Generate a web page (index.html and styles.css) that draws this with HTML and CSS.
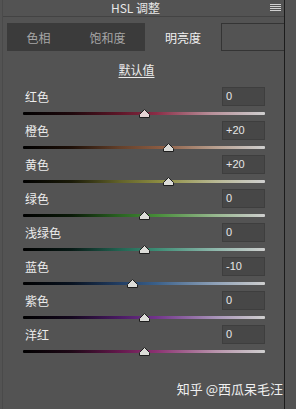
FILE: index.html
```html
<!DOCTYPE html>
<html lang="zh">
<head>
<meta charset="utf-8">
<link rel="stylesheet" href="styles.css">
</head>
<body>
<div class="panel">
  <div class="header">
    <span class="title">HSL 调整</span>
    <svg class="menu" width="11" height="8" viewBox="0 0 11 8"><g fill="#d0d0d0"><rect x="0" y="0" width="11" height="1"/><rect x="0" y="2" width="11" height="1"/><rect x="0" y="4" width="11" height="1"/><rect x="0" y="6" width="11" height="1"/></g></svg>
  </div>
  <div class="tabs">
    <div class="tab t1">色相</div>
    <div class="tab t2">饱和度</div>
    <div class="tab active">明亮度</div>
    <div class="tab-rest"></div>
  </div>
  <div class="default"><span>默认值</span></div>
  <div class="rows">
    <div class="row red">
      <div class="row-top"><span class="label">红色</span><span class="value">0</span></div>
      <div class="slider"><div class="track"></div><svg class="thumb" style="left: calc(50% + 0px)" width="11" height="9" viewBox="0 0 11 9"><polygon points="5.5,0.5 10.5,5.5 10.5,8.5 0.5,8.5 0.5,5.5"/></svg></div>
    </div>
    <div class="row orange">
      <div class="row-top"><span class="label">橙色</span><span class="value">+20</span></div>
      <div class="slider"><div class="track"></div><svg class="thumb" style="left: calc(50% + 24px)" width="11" height="9" viewBox="0 0 11 9"><polygon points="5.5,0.5 10.5,5.5 10.5,8.5 0.5,8.5 0.5,5.5"/></svg></div>
    </div>
    <div class="row yellow">
      <div class="row-top"><span class="label">黄色</span><span class="value">+20</span></div>
      <div class="slider"><div class="track"></div><svg class="thumb" style="left: calc(50% + 24px)" width="11" height="9" viewBox="0 0 11 9"><polygon points="5.5,0.5 10.5,5.5 10.5,8.5 0.5,8.5 0.5,5.5"/></svg></div>
    </div>
    <div class="row green">
      <div class="row-top"><span class="label">绿色</span><span class="value">0</span></div>
      <div class="slider"><div class="track"></div><svg class="thumb" style="left: calc(50% + 0px)" width="11" height="9" viewBox="0 0 11 9"><polygon points="5.5,0.5 10.5,5.5 10.5,8.5 0.5,8.5 0.5,5.5"/></svg></div>
    </div>
    <div class="row aqua">
      <div class="row-top"><span class="label">浅绿色</span><span class="value">0</span></div>
      <div class="slider"><div class="track"></div><svg class="thumb" style="left: calc(50% + 0px)" width="11" height="9" viewBox="0 0 11 9"><polygon points="5.5,0.5 10.5,5.5 10.5,8.5 0.5,8.5 0.5,5.5"/></svg></div>
    </div>
    <div class="row blue">
      <div class="row-top"><span class="label">蓝色</span><span class="value">-10</span></div>
      <div class="slider"><div class="track"></div><svg class="thumb" style="left: calc(50% - 12px)" width="11" height="9" viewBox="0 0 11 9"><polygon points="5.5,0.5 10.5,5.5 10.5,8.5 0.5,8.5 0.5,5.5"/></svg></div>
    </div>
    <div class="row purple">
      <div class="row-top"><span class="label">紫色</span><span class="value">0</span></div>
      <div class="slider"><div class="track"></div><svg class="thumb" style="left: calc(50% + 0px)" width="11" height="9" viewBox="0 0 11 9"><polygon points="5.5,0.5 10.5,5.5 10.5,8.5 0.5,8.5 0.5,5.5"/></svg></div>
    </div>
    <div class="row magenta">
      <div class="row-top"><span class="label">洋红</span><span class="value">0</span></div>
      <div class="slider"><div class="track"></div><svg class="thumb" style="left: calc(50% + 0px)" width="11" height="9" viewBox="0 0 11 9"><polygon points="5.5,0.5 10.5,5.5 10.5,8.5 0.5,8.5 0.5,5.5"/></svg></div>
    </div>
  </div>
  <div class="watermark">知乎 @西瓜呆毛汪</div>
</div>
</body>
</html>
```
FILE: styles.css
```css
html, body {
  margin: 0;
  padding: 0;
  background: #535353;
  width: 296px;
  height: 409px;
  overflow: hidden;
  font-family: "Noto Sans CJK SC", "Noto Sans", sans-serif;
  color: #e6e6e6;
}

.panel {
  margin-left: 2px;
  width: 281px;
  height: 409px;
  border-left: 1px solid #4a4a4a;
  border-right: 1px solid #1c1c1c;
  display: flex;
  flex-direction: column;
}

.header {
  position: relative;
  height: 16px;
  border-bottom: 1px solid #434343;
  display: flex;
  justify-content: center;
  align-items: center;
  padding-right: 16px;
}

.title {
  font-size: 12px;
  line-height: 16px;
  color: #e8e8e8;
}

.menu {
  position: absolute;
  right: 3px;
  top: 4px;
}

.tabs {
  margin-top: 6px;
  margin-left: 4px;
  height: 28px;
  display: flex;
}

.tab {
  display: flex;
  align-items: center;
  justify-content: center;
  font-size: 12px;
  color: #a6a6a6;
  background: #3b3b3b;
}

.t1 { width: 63px; }
.t2 { width: 75px; }

.tab.active {
  width: 76px;
  background: #535353;
  color: #f0f0f0;
}

.tab-rest {
  flex: 1;
  border: 1px solid #343434;
  border-right: none;
}

.default {
  height: 36px;
  display: flex;
  align-items: center;
  justify-content: center;
  padding-right: 14px;
}

.default span {
  font-size: 12px;
  color: #ececec;
  text-decoration: underline;
  text-underline-offset: 2px;
}

.rows {
  padding: 0 19px 0 20px;
}

.row {
  height: 34px;
}

.row-top {
  height: 19px;
  display: flex;
  justify-content: space-between;
  align-items: center;
}

.label {
  margin-left: 2px;
  font-size: 12px;
  color: #ececec;
}

.value {
  width: 43px;
  height: 19px;
  box-sizing: border-box;
  border: 1px solid #3e3e3e;
  background: #474747;
  font-family: "Liberation Sans", Arial, sans-serif;
  font-size: 11px;
  line-height: 17px;
  padding-left: 3px;
  color: #e6e6e6;
}

.slider {
  position: relative;
  height: 15px;
  padding-top: 6px;
  box-sizing: border-box;
}

.track {
  height: 3px;
  width: 242px;
  border-radius: 1px;
}

.thumb {
  position: absolute;
  top: 3px;
  margin-left: -5.5px;
}

.thumb polygon {
  fill: #dcdcd8;
  stroke: #1e1e1e;
  stroke-width: 1;
}

.red .track { background: linear-gradient(to right, #000 0%, #1e080c 20%, #5e1628 40%, #8a2c46 55%, #b8909a 78%, #cfcfcf 100%); }
.red .thumb polygon { fill: #e6d4d4; }
.orange .track { background: linear-gradient(to right, #000 0%, #1e1008 20%, #64402a 40%, #8e5e44 58%, #b8a090 80%, #cfcfcf 100%); }
.yellow .track { background: linear-gradient(to right, #000 0%, #1a1a08 20%, #62622a 40%, #909044 58%, #b8b894 80%, #cfcfcf 100%); }
.green .track { background: linear-gradient(to right, #000 0%, #0a1a08 20%, #2a6422 40%, #468c38 55%, #98b890 80%, #cfcfcf 100%); }
.aqua .track { background: linear-gradient(to right, #000 0%, #081a16 20%, #226452 40%, #3c8c74 55%, #90b8ac 80%, #cfcfcf 100%); }
.blue .track { background: linear-gradient(to right, #000 0%, #081220 20%, #223e64 40%, #3a608a 55%, #90a2b8 80%, #cfcfcf 100%); }
.purple .track { background: linear-gradient(to right, #000 0%, #14081e 20%, #4a1a64 40%, #72348c 55%, #a894b8 80%, #cfcfcf 100%); }
.magenta .track { background: linear-gradient(to right, #000 0%, #1e0816 20%, #64184c 40%, #8c3272 55%, #b894ac 80%, #cfcfcf 100%); }

.watermark {
  margin-top: 21px;
  text-align: right;
  padding-right: 1px;
  font-size: 13px;
  line-height: 18px;
  color: #f0f0f0;
}
```
